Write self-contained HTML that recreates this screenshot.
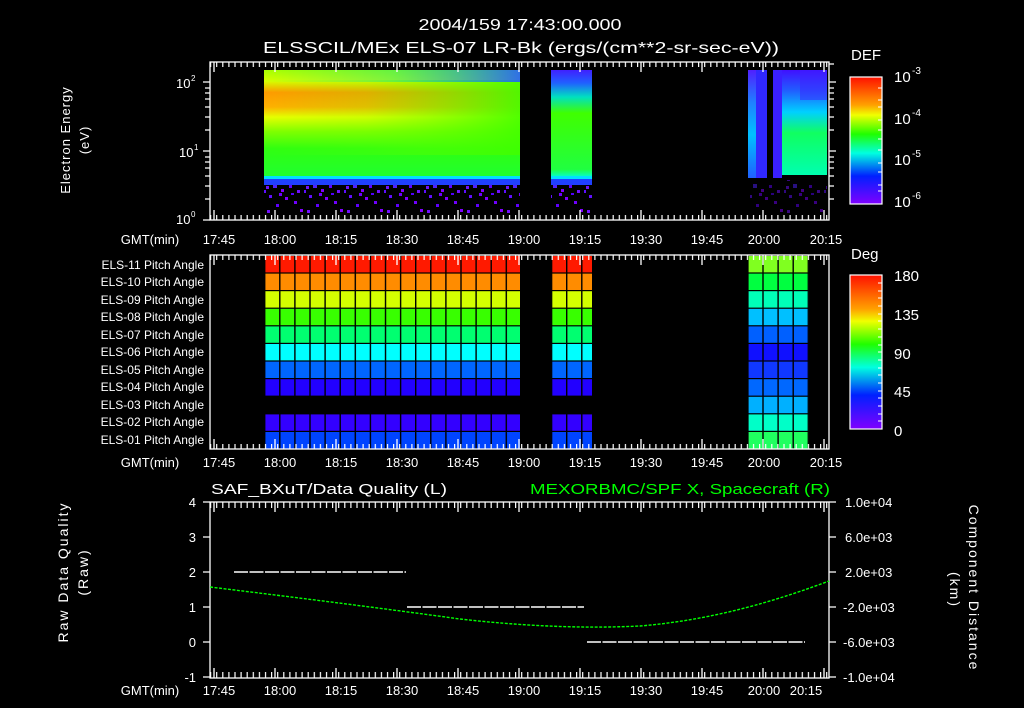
<!DOCTYPE html>
<html><head><meta charset="utf-8"><style>
html,body{margin:0;padding:0;background:#000;}
svg{display:block;font-family:"Liberation Sans",sans-serif;}
</style></head><body>
<svg width="1024" height="708" viewBox="0 0 1024 708" xmlns="http://www.w3.org/2000/svg">
<defs>
<pattern id="tkT" x="210" y="0" width="6.1" height="708" patternUnits="userSpaceOnUse"><rect x="0" y="0" width="1.2" height="708" fill="#fff"/></pattern>
<pattern id="tkV" x="0" y="0" width="1024" height="7.04" patternUnits="userSpaceOnUse"><rect x="0" y="502" width="1024" height="1.2" fill="#fff"/></pattern>
<pattern id="vgrid" x="264" y="0" width="15.1" height="708" patternUnits="userSpaceOnUse"><rect x="0" y="0" width="1.4" height="708" fill="#000"/></pattern>
<linearGradient id="def" x1="0" y1="0" x2="0" y2="1">
<stop offset="0" stop-color="#ff1000"/><stop offset="0.22" stop-color="#ffa000"/><stop offset="0.3" stop-color="#f0ff00"/><stop offset="0.45" stop-color="#20ff00"/><stop offset="0.6" stop-color="#00ffe0"/><stop offset="0.78" stop-color="#0020ff"/><stop offset="1" stop-color="#8000ff"/></linearGradient>
<linearGradient id="spec1" x1="0" y1="0" x2="0" y2="1">
<stop offset="0" stop-color="#a8ff00"/><stop offset="0.1" stop-color="#d8ff00"/><stop offset="0.2" stop-color="#ff9a00"/><stop offset="0.33" stop-color="#ffb000"/><stop offset="0.42" stop-color="#e8ff00"/><stop offset="0.55" stop-color="#80ff00"/><stop offset="0.7" stop-color="#30ff10"/><stop offset="0.95" stop-color="#20ff30"/><stop offset="1" stop-color="#00ffd0"/></linearGradient>
<linearGradient id="greenH" x1="0" y1="0" x2="1" y2="0">
<stop offset="0" stop-color="#60ff00" stop-opacity="0"/><stop offset="0.4" stop-color="#60ff00" stop-opacity="0.2"/><stop offset="1" stop-color="#40ff00" stop-opacity="0.9"/></linearGradient>
<linearGradient id="cyanH" x1="0" y1="0" x2="1" y2="0">
<stop offset="0" stop-color="#00e0a0" stop-opacity="0"/><stop offset="0.5" stop-color="#00e0a0" stop-opacity="0.4"/><stop offset="1" stop-color="#2060ff" stop-opacity="0.9"/></linearGradient>
<linearGradient id="spec2" x1="0" y1="0" x2="0" y2="1">
<stop offset="0" stop-color="#4020ff"/><stop offset="0.12" stop-color="#2060ff"/><stop offset="0.25" stop-color="#00e0c0"/><stop offset="0.4" stop-color="#40ff00"/><stop offset="0.92" stop-color="#20ff40"/><stop offset="1" stop-color="#00ffe0"/></linearGradient>
<linearGradient id="specB" x1="0" y1="0" x2="0" y2="1">
<stop offset="0" stop-color="#4010ff"/><stop offset="0.2" stop-color="#2060ff"/><stop offset="0.4" stop-color="#00d0ff"/><stop offset="0.6" stop-color="#10ff60"/><stop offset="1" stop-color="#00ffb0"/></linearGradient>
<linearGradient id="specC" x1="0" y1="0" x2="0" y2="1">
<stop offset="0" stop-color="#5020ff"/><stop offset="0.3" stop-color="#2080ff"/><stop offset="0.6" stop-color="#00c0ff"/><stop offset="1" stop-color="#2060ff"/></linearGradient>
<pattern id="speck" x="264" y="184" width="40" height="32" patternUnits="userSpaceOnUse">
<rect x="2" y="2" width="3" height="3" fill="#7010ff"/><rect x="9" y="0" width="4" height="4" fill="#5020ff"/><rect x="17" y="5" width="3" height="3" fill="#8000ff"/><rect x="25" y="1" width="3" height="3" fill="#6000ff"/><rect x="33" y="6" width="3" height="3" fill="#7010ff"/><rect x="5" y="11" width="3" height="3" fill="#6010ff"/><rect x="21" y="13" width="3" height="3" fill="#8000ff"/><rect x="30" y="17" width="3" height="3" fill="#7000ff"/><rect x="12" y="20" width="3" height="3" fill="#6000ff"/><rect x="3" y="26" width="3" height="3" fill="#7010ff"/><rect x="36" y="25" width="3" height="3" fill="#8000ff"/><rect x="15" y="9" width="3" height="3" fill="#7000ff"/><rect x="0" y="6" width="2" height="3" fill="#6010ff"/><rect x="27" y="9" width="3" height="2" fill="#5000ff"/></pattern>
</defs>

<text x="520" y="30" fill="#fff" font-size="16" text-anchor="middle" textLength="203" lengthAdjust="spacingAndGlyphs">2004/159 17:43:00.000</text>
<text x="521" y="53" fill="#fff" font-size="16" text-anchor="middle" textLength="516" lengthAdjust="spacingAndGlyphs">ELSSCIL/MEx ELS-07 LR-Bk  (ergs/(cm**2-sr-sec-eV))</text>

<!-- TOP PANEL -->
<rect x="264" y="70" width="256" height="112" fill="url(#spec1)"/>
<rect x="264" y="80" width="256" height="75" fill="url(#greenH)"/>
<rect x="264" y="70" width="256" height="12" fill="url(#cyanH)"/>
<rect x="264" y="176" width="256" height="3" fill="#00e0ff"/>
<rect x="264" y="179" width="256" height="6" fill="#2040ff"/>
<rect x="264" y="185" width="256" height="31" fill="url(#speck)"/>
<rect x="551" y="70" width="41" height="108" fill="url(#spec2)"/>
<rect x="551" y="176" width="41" height="3" fill="#00e0ff"/>
<rect x="551" y="179" width="41" height="6" fill="#2040ff"/>
<rect x="551" y="185" width="41" height="29" fill="url(#speck)"/>
<rect x="748" y="70" width="8" height="108" fill="url(#specC)"/>
<rect x="756" y="70" width="11" height="108" fill="#3028ff"/>
<rect x="773" y="70" width="9" height="108" fill="#3a20ff"/>
<rect x="782" y="70" width="45" height="105" fill="url(#specB)"/>
<rect x="800" y="70" width="27" height="30" fill="#4020ff" opacity="0.5"/>
<rect x="750" y="180" width="77" height="36" fill="url(#speck)" opacity="0.5"/>

<rect x="210" y="62" width="619" height="158" fill="none" stroke="#fff" stroke-width="1.3"/>
<rect x="210" y="62" width="619" height="5" fill="url(#tkT)"/>
<rect x="210" y="215" width="619" height="5" fill="url(#tkT)"/>
<g stroke="#fff" stroke-width="1.3">
<path d="M203 82H210M203 151H210M203 220H210M205 130H210M205 117H210M205 107H210M205 99H210M205 93H210M205 88H210M205 199H210M205 186H210M205 176H210M205 168H210M205 162H210M205 157H210"/>
<path d="M829 82H836M829 151H836M829 130H834M829 117H834M829 107H834M829 99H834M829 93H834M829 88H834M829 199H834M829 186H834M829 176H834M829 168H834M829 162H834M829 157H834M829 64H834"/>
<path d="M214 62V72M275 62V72M336 62V72M397 62V72M458 62V72M519 62V72M580 62V72M641 62V72M702 62V72M763 62V72M824 62V72M214 220V210M275 220V210M336 220V210M397 220V210M458 220V210M519 220V210M580 220V210M641 220V210M702 220V210M763 220V210M824 220V210"/>
</g>
<g fill="#fff" font-size="13">
<text x="176" y="88">10</text><text x="191" y="81" font-size="8">2</text>
<text x="179" y="157">10</text><text x="194" y="150" font-size="8">1</text>
<text x="176" y="224">10</text><text x="191" y="217" font-size="8">0</text>
</g>
<text transform="translate(70,140) rotate(-90)" fill="#fff" font-size="13" text-anchor="middle" letter-spacing="1">Electron Energy</text>
<text transform="translate(89,140) rotate(-90)" fill="#fff" font-size="13" text-anchor="middle" letter-spacing="1">(eV)</text>

<g fill="#fff" font-size="13" text-anchor="middle">
<text x="150" y="244">GMT(min)</text>
<text x="219" y="244">17:45</text><text x="280" y="244">18:00</text><text x="341" y="244">18:15</text><text x="402" y="244">18:30</text><text x="463" y="244">18:45</text><text x="524" y="244">19:00</text><text x="585" y="244">19:15</text><text x="646" y="244">19:30</text><text x="707" y="244">19:45</text><text x="764" y="244">20:00</text><text x="826" y="244">20:15</text>
<text x="150" y="467">GMT(min)</text>
<text x="219" y="467">17:45</text><text x="280" y="467">18:00</text><text x="341" y="467">18:15</text><text x="402" y="467">18:30</text><text x="463" y="467">18:45</text><text x="524" y="467">19:00</text><text x="585" y="467">19:15</text><text x="646" y="467">19:30</text><text x="707" y="467">19:45</text><text x="764" y="467">20:00</text><text x="826" y="467">20:15</text>
<text x="150" y="695">GMT(min)</text>
<text x="219" y="695">17:45</text><text x="280" y="695">18:00</text><text x="341" y="695">18:15</text><text x="402" y="695">18:30</text><text x="463" y="695">18:45</text><text x="524" y="695">19:00</text><text x="585" y="695">19:15</text><text x="646" y="695">19:30</text><text x="707" y="695">19:45</text><text x="764" y="695">20:00</text><text x="806" y="695">20:15</text>
</g>

<text x="851" y="60" fill="#fff" font-size="15">DEF</text>
<rect x="850" y="77" width="32" height="127" fill="url(#def)" stroke="#fff" stroke-width="1.2"/>
<g stroke="#fff" stroke-width="1"><path d="M878 88H882M878 100H882M878 107H882M878 120H882M878 130H882M878 139H882M878 150H882M878 163H882M878 172H882M878 185H882M878 191H882"/></g>
<g fill="#fff" font-size="15">
<text x="894" y="82">10</text><text x="912" y="74" font-size="10">-3</text>
<text x="894" y="124">10</text><text x="912" y="116" font-size="10">-4</text>
<text x="894" y="165">10</text><text x="912" y="157" font-size="10">-5</text>
<text x="894" y="207">10</text><text x="912" y="199" font-size="10">-6</text>
</g>

<!-- MIDDLE PANEL -->
<g>
<rect x="264" y="256" width="256" height="16.4" fill="#ff1a00"/>
<rect x="264" y="273.6" width="256" height="16.4" fill="#ff8c00"/>
<rect x="264" y="291.2" width="256" height="16.4" fill="#d4ff00"/>
<rect x="264" y="308.8" width="256" height="16.4" fill="#38ff00"/>
<rect x="264" y="326.4" width="256" height="16.4" fill="#00ff70"/>
<rect x="264" y="344" width="256" height="16.4" fill="#00ffff"/>
<rect x="264" y="361.6" width="256" height="16.4" fill="#0066ff"/>
<rect x="264" y="379.2" width="256" height="16.4" fill="#2200ff"/>
<rect x="264" y="414.4" width="256" height="16.4" fill="#3300ff"/>
<rect x="264" y="432" width="256" height="17" fill="#0044ff"/>
<rect x="551" y="256" width="41" height="16.4" fill="#ff1a00"/>
<rect x="551" y="273.6" width="41" height="16.4" fill="#ff8c00"/>
<rect x="551" y="291.2" width="41" height="16.4" fill="#d4ff00"/>
<rect x="551" y="308.8" width="41" height="16.4" fill="#38ff00"/>
<rect x="551" y="326.4" width="41" height="16.4" fill="#00ff70"/>
<rect x="551" y="344" width="41" height="16.4" fill="#00ffff"/>
<rect x="551" y="361.6" width="41" height="16.4" fill="#0066ff"/>
<rect x="551" y="379.2" width="41" height="16.4" fill="#2200ff"/>
<rect x="551" y="414.4" width="41" height="16.4" fill="#3300ff"/>
<rect x="551" y="432" width="41" height="17" fill="#0044ff"/>
<rect x="748" y="256" width="61" height="16.4" fill="#80ff20"/>
<rect x="748" y="273.6" width="61" height="16.4" fill="#00ff40"/>
<rect x="748" y="291.2" width="61" height="16.4" fill="#00ffb8"/>
<rect x="748" y="308.8" width="61" height="16.4" fill="#00c0ff"/>
<rect x="748" y="326.4" width="61" height="16.4" fill="#0060ff"/>
<rect x="748" y="344" width="61" height="16.4" fill="#1010ff"/>
<rect x="748" y="361.6" width="61" height="16.4" fill="#1038ff"/>
<rect x="748" y="379.2" width="61" height="16.4" fill="#0068ff"/>
<rect x="748" y="396.8" width="61" height="16.4" fill="#00b0ff"/>
<rect x="748" y="414.4" width="61" height="16.4" fill="#00ffc8"/>
<rect x="748" y="432" width="61" height="17" fill="#20ff60"/>
<rect x="260" y="255" width="560" height="194" fill="url(#vgrid)"/>
</g>
<rect x="210" y="255" width="619" height="194" fill="none" stroke="#fff" stroke-width="1.3"/>
<rect x="210" y="255" width="619" height="5" fill="url(#tkT)"/>
<rect x="210" y="444" width="619" height="5" fill="url(#tkT)"/>
<g stroke="#fff" stroke-width="1.3"><path d="M214 255V265M275 255V265M336 255V265M397 255V265M458 255V265M519 255V265M580 255V265M641 255V265M702 255V265M763 255V265M824 255V265M214 449V439M275 449V439M336 449V439M397 449V439M458 449V439M519 449V439M580 449V439M641 449V439M702 449V439M763 449V439M824 449V439"/></g>
<g fill="#fff" font-size="12" text-anchor="end">
<text x="204" y="269">ELS-11 Pitch Angle</text>
<text x="204" y="286">ELS-10 Pitch Angle</text>
<text x="204" y="304">ELS-09 Pitch Angle</text>
<text x="204" y="321">ELS-08 Pitch Angle</text>
<text x="204" y="339">ELS-07 Pitch Angle</text>
<text x="204" y="356">ELS-06 Pitch Angle</text>
<text x="204" y="374">ELS-05 Pitch Angle</text>
<text x="204" y="391">ELS-04 Pitch Angle</text>
<text x="204" y="409">ELS-03 Pitch Angle</text>
<text x="204" y="426">ELS-02 Pitch Angle</text>
<text x="204" y="444">ELS-01 Pitch Angle</text>
</g>

<text x="851" y="259" fill="#fff" font-size="15">Deg</text>
<rect x="850" y="275" width="32" height="154" fill="url(#def)" stroke="#fff" stroke-width="1.2"/>
<g stroke="#fff" stroke-width="1"><path d="M878 283H882M878 291H882M878 298H882M878 306H882M878 314H882M878 321H882M878 329H882M878 337H882M878 345H882M878 352H882M878 360H882M878 368H882M878 375H882M878 383H882M878 391H882M878 398H882M878 406H882M878 414H882M878 421H882"/></g>
<g fill="#fff" font-size="15">
<text x="894" y="281">180</text><text x="894" y="320">135</text><text x="894" y="359">90</text><text x="894" y="397">45</text><text x="894" y="436">0</text>
</g>

<!-- BOTTOM PANEL -->
<text x="211" y="494" fill="#fff" font-size="15" textLength="236" lengthAdjust="spacingAndGlyphs">SAF_BXuT/Data Quality (L)</text>
<text x="530" y="494" fill="#00ff00" font-size="15" textLength="300" lengthAdjust="spacingAndGlyphs">MEXORBMC/SPF X, Spacecraft (R)</text>
<rect x="210" y="502" width="619" height="176" fill="none" stroke="#fff" stroke-width="1.3"/>
<rect x="210" y="502" width="619" height="6" fill="url(#tkT)"/>
<rect x="210" y="672" width="619" height="6" fill="url(#tkT)"/>
<rect x="210" y="502" width="5" height="176" fill="url(#tkV)"/>
<rect x="824" y="502" width="5" height="176" fill="url(#tkV)"/>
<g stroke="#fff" stroke-width="1.3"><path d="M203 502H210M203 537H210M203 572H210M203 607H210M203 642H210M203 677H210M829 502H836M829 537H836M829 572H836M829 607H836M829 642H836M829 677H836"/>
<path d="M214 502V512M275 502V512M336 502V512M397 502V512M458 502V512M519 502V512M580 502V512M641 502V512M702 502V512M763 502V512M824 502V512M214 678V668M275 678V668M336 678V668M397 678V668M458 678V668M519 678V668M580 678V668M641 678V668M702 678V668M763 678V668M824 678V668"/></g>
<g fill="#fff" font-size="13" text-anchor="end">
<text x="196" y="507">4</text><text x="196" y="542">3</text><text x="196" y="577">2</text><text x="196" y="612">1</text><text x="196" y="647">0</text><text x="196" y="682">-1</text>
</g>
<g fill="#fff" font-size="13">
<text x="845" y="507">1.0e+04</text><text x="845" y="542">6.0e+03</text><text x="845" y="577">2.0e+03</text><text x="843" y="612">-2.0e+03</text><text x="843" y="647">-6.0e+03</text><text x="843" y="682">-1.0e+04</text>
</g>
<text transform="translate(68,572) rotate(-90)" fill="#fff" font-size="14" text-anchor="middle" letter-spacing="2">Raw Data Quality</text>
<text transform="translate(88,572) rotate(-90)" fill="#fff" font-size="14" text-anchor="middle" letter-spacing="2">(Raw)</text>
<text transform="translate(969,588) rotate(90)" fill="#fff" font-size="14" text-anchor="middle" letter-spacing="2">Component Distance</text>
<text transform="translate(950,590) rotate(90)" fill="#fff" font-size="14" text-anchor="middle" letter-spacing="2">(km)</text>
<g stroke="#fff" stroke-width="1.5" stroke-dasharray="14,1.5" fill="none">
<path d="M234 572H406"/><path d="M407 607H584"/><path d="M587 642H805"/>
</g>
<path d="M210 587 C300 598 380 608 460 619 C540 628 600 628 640 626 C700 621 760 607 829 581" fill="none" stroke="#00ff00" stroke-width="1.4" stroke-dasharray="3,1.5"/>
</svg>
</body></html>
